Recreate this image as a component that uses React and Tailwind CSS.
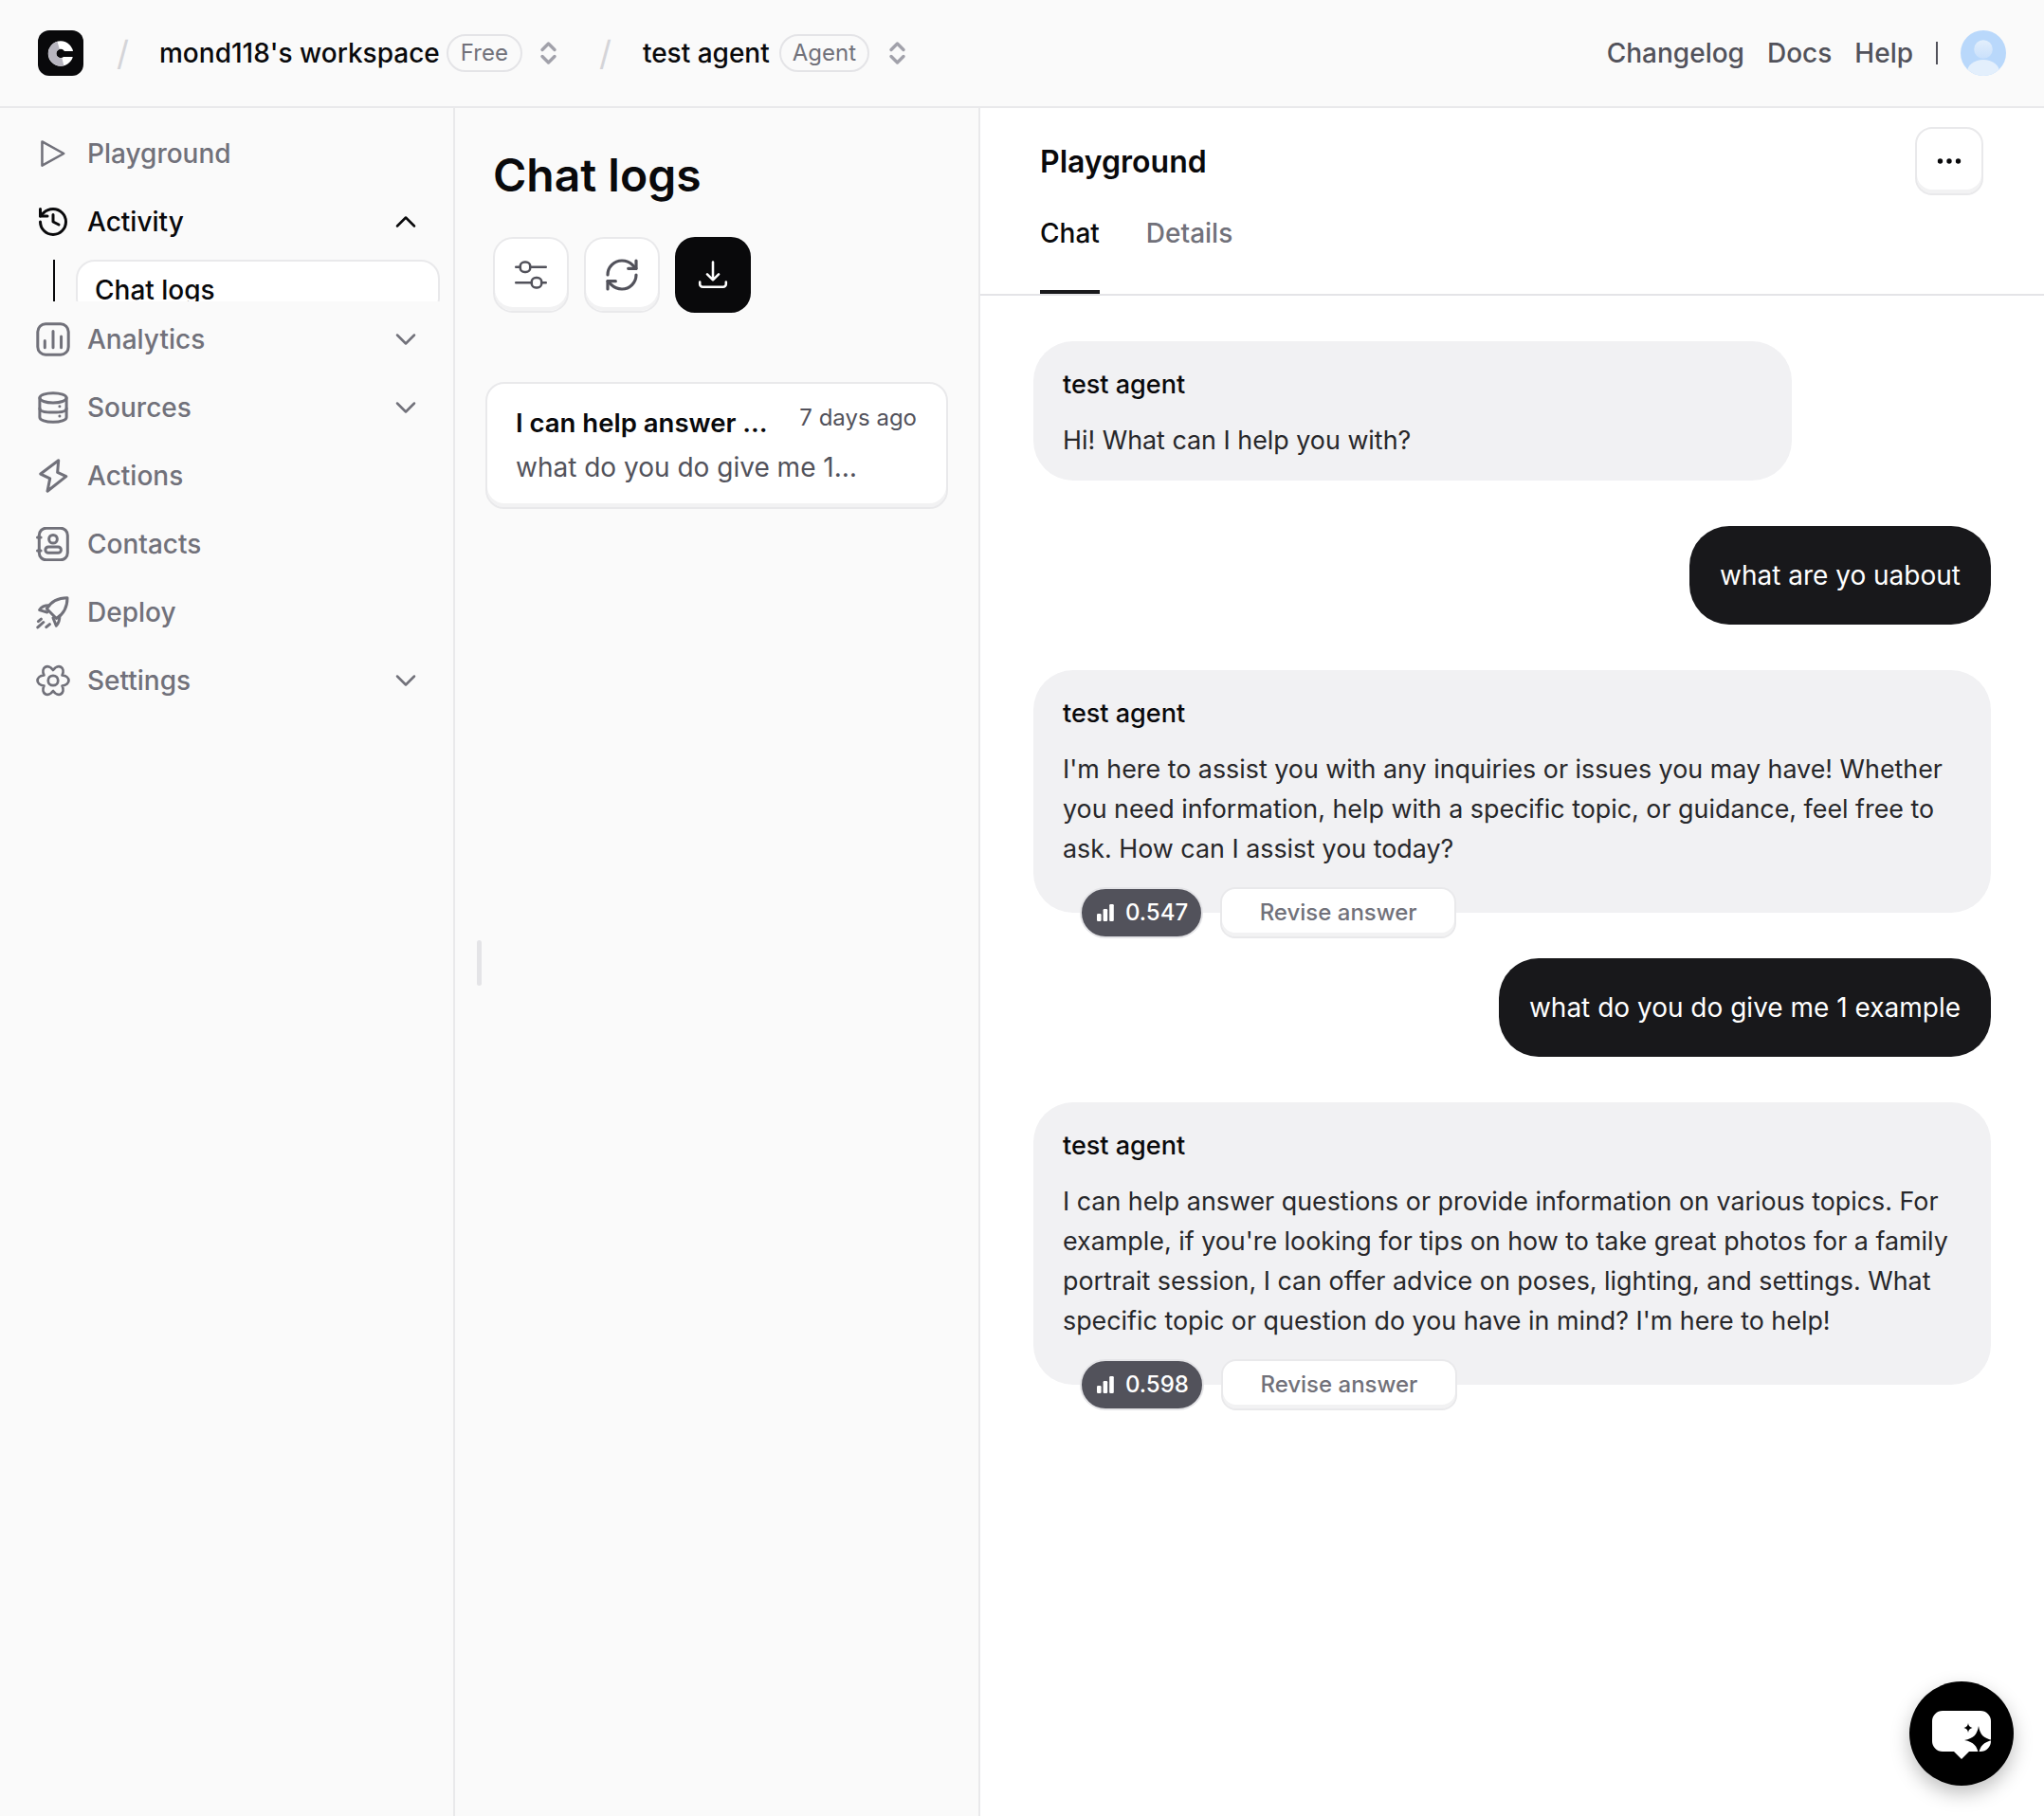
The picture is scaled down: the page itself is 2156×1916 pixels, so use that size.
import { ChevronDown, ChevronUp, History, RefreshCw } from 'lucide-react'

function Icono({ children, className = 'text-[#71717a]' }) {
  return (
    <svg
      width="36"
      height="36"
      viewBox="0 0 24 24"
      fill="none"
      stroke="currentColor"
      strokeWidth="2"
      strokeLinecap="round"
      strokeLinejoin="round"
      className={`shrink-0 ${className}`}
    >
      {children}
    </svg>
  )
}

const PlayIcon = () => (
  <Icono>
    <path d="M4.3 3.6 19.5 12 4.3 20.4Z" strokeWidth="1.7" />
  </Icono>
)

const AnalyticsIcon = () => (
  <Icono>
    <rect x="1.2" y="1.2" width="21.6" height="21.6" rx="5.5" />
    <path d="M6.2 13v4.8M12 6.4v11.4M17.7 10v7.8" />
  </Icono>
)

const SourcesIcon = () => (
  <Icono>
    <path d="M2.6 5.2c0-2 4.2-3.4 9.4-3.4s9.4 1.4 9.4 3.4-4.2 3.4-9.4 3.4-9.4-1.4-9.4-3.4Z" />
    <path d="M2.6 5.2v13.6c0 2 4.2 3.4 9.4 3.4s9.4-1.4 9.4-3.4V5.2" />
    <path d="M2.6 12.6c0 2 4.2 2.8 9.4 2.8s9.4-.8 9.4-2.8" />
    <path d="M16.6 11.2h.01M16.6 18h.01" />
  </Icono>
)

const ActionsIcon = () => (
  <Icono>
    <path d="M15.8 1.2 3.2 10.7l6.6 3.2L8 22.8l13.2-10.4-6.1-2.8Z" />
  </Icono>
)

const ContactsIcon = () => (
  <Icono>
    <rect x="2.2" y="0.8" width="20" height="22.4" rx="5" />
    <path d="M1 7.4h2.4M1 16.6h2.4" />
    <circle cx="12" cy="8.5" r="2.9" />
    <rect x="6.6" y="14" width="11" height="4.2" rx="2.1" />
  </Icono>
)

const DeployIcon = () => (
  <Icono>
    <path d="M22 1.8C15.5 1.8 10.5 4.5 7.5 9.5l6.8 6.8c5-3 7.7-8 7.7-14.5Z" />
    <path d="M9 7.2C6.2 7.2 3.8 8.2 2.4 10.4L7.8 12" />
    <path d="M16.6 14.6c0 2.8-.8 5.2-2.4 6.8L12 16" />
    <path d="M1.6 18.4l2-1.6M1.2 22.6l4-3.6M7.2 22.4l2.4-2" />
  </Icono>
)

const SettingsIcon = () => (
  <Icono>
    <g transform="translate(12 12) scale(.92) translate(-12 -12)">
      <path d="M18.93 8C25.58 8.61 25.58 15.39 18.93 16C21.73 22.07 15.86 25.46 12 20C8.14 25.46 2.27 22.07 5.07 16C-1.58 15.39 -1.58 8.61 5.07 8C2.27 1.93 8.14 -1.46 12 4C15.86 -1.46 21.73 1.93 18.93 8Z" />
      <circle cx="12" cy="12" r="3.8" />
    </g>
  </Icono>
)

function UpDown() {
  return (
    <svg width="19" height="26" viewBox="0 0 19 26" fill="none" stroke="#a1a1aa" strokeWidth="3.4" strokeLinecap="round" strokeLinejoin="round" className="shrink-0">
      <path d="M3 9.5 9.5 3 16 9.5M3 16.5 9.5 23 16 16.5" />
    </svg>
  )
}

function Logo() {
  return (
    <div className="flex h-[48px] w-[48px] shrink-0 items-center justify-center rounded-[12px] bg-[#09090b]">
      <svg width="48" height="48" viewBox="0 0 48 48" fill="none" strokeWidth="8.5">
        <circle cx="24" cy="24.5" r="9" stroke="#ffffff" />
        <path d="M21.67 15.81A9 9 0 0 0 26.33 33.19" stroke="#b7b5bf" />
        <rect x="25" y="22" width="15" height="6" fill="#09090b" />
      </svg>
    </div>
  )
}

function Avatar() {
  return (
    <svg width="48" height="48" viewBox="0 0 48 48" className="shrink-0">
      <defs>
        <clipPath id="circuloAvatar">
          <circle cx="24" cy="24" r="24" />
        </clipPath>
        <linearGradient id="cabeza" x1="0" y1="0" x2="0" y2="1">
          <stop offset="0" stopColor="#e3effc" />
          <stop offset="1" stopColor="#c9e0fb" />
        </linearGradient>
      </defs>
      <g clipPath="url(#circuloAvatar)">
        <rect width="48" height="48" fill="#b9d8fb" />
        <circle cx="24" cy="20" r="9.8" fill="url(#cabeza)" />
        <ellipse cx="24" cy="44" rx="17" ry="13" fill="#e3effc" />
      </g>
    </svg>
  )
}

const ITEMS_ABAJO = [
  { nombre: 'Analytics', Icon: AnalyticsIcon, flecha: true },
  { nombre: 'Sources', Icon: SourcesIcon, flecha: true },
  { nombre: 'Actions', Icon: ActionsIcon },
  { nombre: 'Contacts', Icon: ContactsIcon },
  { nombre: 'Deploy', Icon: DeployIcon },
  { nombre: 'Settings', Icon: SettingsIcon, flecha: true },
]

function ItemMenu({ nombre, Icon, flecha }) {
  return (
    <div className="flex h-[72px] items-center pl-[38px] pr-[32px] text-[#71717a]">
      <Icon />
      <span className="ml-[18px] flex-1">{nombre}</span>
      {flecha && <ChevronDown size={36} strokeWidth={1.7} />}
    </div>
  )
}

function Sidebar() {
  return (
    <aside className="w-[480px] shrink-0 border-r-2 border-[#e9e9eb] pt-[12px] text-[28px] font-medium leading-[42px]">
      <ItemMenu nombre="Playground" Icon={PlayIcon} />
      <div className="flex h-[72px] items-center pl-[38px] pr-[32px] text-[#09090b]">
        <History size={36} strokeWidth={2} className="shrink-0" />
        <span className="ml-[18px] flex-1">Activity</span>
        <ChevronUp size={36} strokeWidth={1.7} />
      </div>
      <div className="mb-[4px] mt-[4px] flex h-[44px] overflow-hidden pl-[56px]">
        <div className="w-[2px] shrink-0 bg-[#09090b]" />
        <div className="ml-[22px] h-[60px] w-[384px] rounded-[20px] border-2 border-[#e9e9eb] bg-white pl-[18px] pt-[9px] text-[#09090b]">
          Chat logs
        </div>
      </div>
      {ITEMS_ABAJO.map((item) => (
        <ItemMenu key={item.nombre} {...item} />
      ))}
    </aside>
  )
}

function BotonIcono({ children, oscuro }) {
  if (oscuro) {
    return (
      <button type="button" className="flex h-[80px] w-[80px] items-center justify-center rounded-[21px] bg-[#09090b] text-white">
        {children}
      </button>
    )
  }
  return (
    <button type="button" className="flex h-[80px] w-[80px] items-center justify-center rounded-[21px] border-2 border-[#e9e9eb] bg-white text-[#52525b] shadow-[inset_0_-4px_0_#f2f2f3]">
      {children}
    </button>
  )
}

function ListaChats() {
  return (
    <section className="relative w-[554px] shrink-0 border-r-2 border-[#e9e9eb] pt-[41px]">
      <h1 className="pl-[40px] text-[48px] font-semibold leading-[60px] text-[#09090b]">Chat logs</h1>
      <div className="mt-[35px] flex gap-[16px] pl-[40px]">
        <BotonIcono>
          <svg width="36" height="36" viewBox="0 0 24 24" fill="none" stroke="currentColor" strokeWidth="1.7" strokeLinecap="round">
            <path d="M1.5 6.5h2.8M12 6.5h10.5M1.5 17.5h10.5M19.7 17.5h2.8" />
            <rect x="4.5" y="3" width="7" height="7" rx="3" />
            <rect x="12.5" y="14" width="7" height="7" rx="3" />
          </svg>
        </BotonIcono>
        <BotonIcono>
          <RefreshCw size={40} strokeWidth={1.9} />
        </BotonIcono>
        <BotonIcono oscuro>
          <svg width="36" height="36" viewBox="0 0 24 24" fill="none" stroke="currentColor" strokeWidth="1.7" strokeLinecap="round" strokeLinejoin="round">
            <path d="M12 3v12.5M8 11.6l4 4 4-4M2.8 17v1.5a2 2 0 0 0 2 2h14.4a2 2 0 0 0 2-2V17" />
          </svg>
        </BotonIcono>
      </div>
      <div className="ml-[32px] mt-[73px] h-[134px] w-[488px] rounded-[20px] border-2 border-[#e9e9eb] bg-white pl-[30px] pr-[31px] pt-[18px] shadow-[inset_0_-4px_0_#f2f2f3]">
        <div className="flex items-start justify-between">
          <span className="pt-[2px] text-[27.5px] font-semibold leading-[42px] text-[#09090b]">I can help answer …</span>
          <span className="text-[24px] leading-[36px] text-[#52525b]">7 days ago</span>
        </div>
        <p className="mt-[5px] text-[28px] leading-[42px] text-[#52525b]">what do you do give me 1…</p>
      </div>
      <div className="absolute left-[23px] top-[878px] h-[48px] w-[5px] rounded-full bg-[#e4e4e7]" />
    </section>
  )
}

function BurbujaAgente({ children, conPuntaje, angosta }) {
  return (
    <div className={`rounded-[42px] bg-[#f1f1f3] px-[31px] pt-[25px] text-[26.85px] leading-[42px] text-[#27272a] ${conPuntaje ? 'pb-[47px]' : 'pb-[22px]'} ${angosta ? 'w-[800px]' : ''}`}>
      <div className="text-[27px] font-medium text-[#09090b]">test agent</div>
      <div className="mt-[16px]">{children}</div>
    </div>
  )
}

function BurbujaUsuario({ children }) {
  return (
    <div className="w-fit self-end rounded-[42px] bg-[#18181b] px-[32px] py-[31px] text-[28px] leading-[42px] text-white">
      {children}
    </div>
  )
}

function Puntaje({ valor }) {
  return (
    <div className="-mt-[27px] mb-[-27px] ml-[49px] flex gap-[18px]">
      <div className="flex h-[54px] items-center gap-[12px] rounded-full border-2 border-[#e4e4e7] bg-[#52525b] pl-[16px] pr-[14px] text-[24px] font-medium text-white">
        <svg width="18" height="18" viewBox="0 0 18 18" fill="white">
          <rect x="0" y="10" width="4.6" height="8" rx="1.2" />
          <rect x="6.6" y="5" width="4.6" height="13" rx="1.2" />
          <rect x="13.2" y="0" width="4.6" height="18" rx="1.2" />
        </svg>
        {valor}
      </div>
      <div className="flex h-[54px] w-[249px] items-center justify-center rounded-[16px] border-2 border-[#e9e9eb] bg-white text-[24px] font-medium text-[#71717a] shadow-[inset_0_-4px_0_#f2f2f3]">
        Revise answer
      </div>
    </div>
  )
}

function Panel() {
  return (
    <section className="flex-1 bg-white">
      <div className="border-b-2 border-[#e4e4e7] px-[63px] pr-[64px] pt-[20px]">
        <div className="flex h-[72px] items-center justify-between">
          <h2 className="pt-[2px] text-[32px] font-semibold text-[#09090b]">Playground</h2>
          <button type="button" className="flex h-[72px] w-[72px] items-center justify-center rounded-[18px] border-2 border-[#e9e9eb] bg-white shadow-[inset_0_-4px_0_#f2f2f3]">
            <svg width="26" height="8" viewBox="0 0 26 8" fill="#09090b">
              <circle cx="3.5" cy="4" r="2.7" />
              <circle cx="13" cy="4" r="2.7" />
              <circle cx="22.5" cy="4" r="2.7" />
            </svg>
          </button>
        </div>
        <div className="flex gap-[49px] text-[28px] font-medium leading-[40px]">
          <div className="border-b-[4px] border-[#18181b] pb-[40px] pt-[20px] text-[#09090b]">Chat</div>
          <div className="pb-[44px] pt-[20px] text-[#71717a]">Details</div>
        </div>
      </div>
      <div className="flex flex-col gap-[48px] px-[56px] pt-[48px]">
        <BurbujaAgente angosta>Hi! What can I help you with?</BurbujaAgente>
        <BurbujaUsuario>what are yo uabout</BurbujaUsuario>
        <div>
          <BurbujaAgente conPuntaje>
            I'm here to assist you with any inquiries or issues you may have! Whether you need information, help with a specific topic, or guidance, feel free to ask. How can I assist you today?
          </BurbujaAgente>
          <Puntaje valor="0.547" />
        </div>
        <BurbujaUsuario>what do you do give me 1 example</BurbujaUsuario>
        <div>
          <BurbujaAgente conPuntaje>
            I can help answer questions or provide information on various topics. For example, if you're looking for tips on how to take great photos for a family portrait session, I can offer advice on poses, lighting, and settings. What specific topic or question do you have in mind? I'm here to help!
          </BurbujaAgente>
          <Puntaje valor="0.598" />
        </div>
      </div>
    </section>
  )
}

function Encabezado() {
  return (
    <header className="flex h-[114px] shrink-0 items-center border-b-2 border-[#e9e9eb] pl-[40px] pr-[40px] text-[28px] leading-[42px]">
      <Logo />
      <span className="ml-[35px] mr-[35px] w-[10px] text-center text-[36px] text-[#d4d4d8]">/</span>
      <span className="font-medium text-[#09090b]">mond118's workspace</span>
      <span className="ml-[7px] flex h-[40px] items-center rounded-full border-2 border-[#e4e4e7] px-[13px] text-[24px] text-[#71717a]">Free</span>
      <span className="ml-[18px]"><UpDown /></span>
      <span className="ml-[44px] mr-[36px] w-[10px] text-center text-[36px] text-[#d4d4d8]">/</span>
      <span className="font-medium text-[#09090b]">test agent</span>
      <span className="ml-[10px] flex h-[40px] items-center rounded-full border-2 border-[#e4e4e7] px-[12px] text-[24px] text-[#71717a]">Agent</span>
      <span className="ml-[20px]"><UpDown /></span>
      <nav className="ml-auto flex items-center gap-[24px] font-medium text-[#52525b]">
        <span>Changelog</span>
        <span>Docs</span>
        <span>Help</span>
        <span className="h-[24px] w-[2px] bg-[#52525b]" />
        <Avatar />
      </nav>
    </header>
  )
}

function App() {
  return (
    <div className="relative flex h-screen flex-col overflow-hidden bg-[#fafafa] font-['Inter',sans-serif]">
      <Encabezado />
      <div className="flex flex-1">
        <Sidebar />
        <ListaChats />
        <Panel />
      </div>
      <button type="button" className="absolute bottom-[32px] right-[32px] h-[110px] w-[110px] rounded-full bg-black shadow-[0_8px_20px_rgba(0,0,0,0.25)]">
        <svg width="110" height="110" viewBox="0 0 110 110">
          <path d="M35 31h40a11 11 0 0 1 11 11v21a11 11 0 0 1-11 11H63l-8 8-8-8H35a11 11 0 0 1-11-11V42a11 11 0 0 1 11-11Z" fill="white" />
          <path d="M73 47c1.5 9 5 13 15 15-10 2-13.5 6-15 15-1.5-9-5-13-15-15 10-2 13.5-6 15-15Z" fill="black" />
          <path d="M62 44c.5 3 1.5 4.3 4.5 5-3 .7-4 2-4.5 5-.5-3-1.5-4.3-4.5-5 3-.7 4-2 4.5-5Z" fill="black" />
        </svg>
      </button>
    </div>
  )
}

export default App
